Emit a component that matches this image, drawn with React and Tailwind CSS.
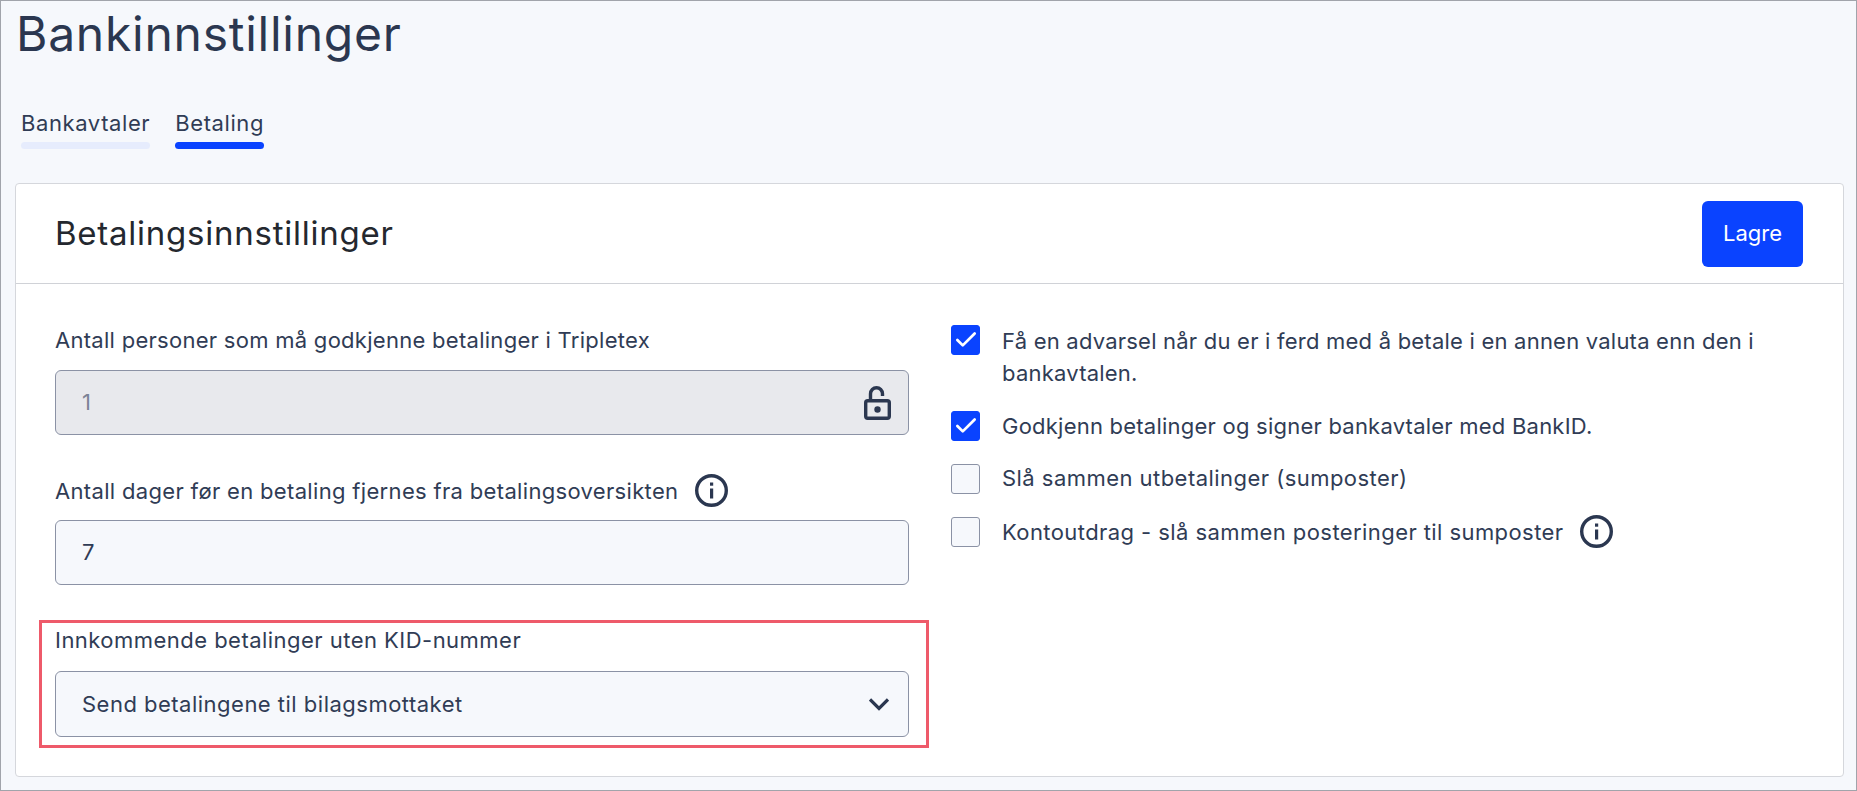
import { Check } from "lucide-react";

const font = { fontFamily: "Inter, sans-serif" };

function InfoIcon() {
  return (
    <svg viewBox="0 0 33 33" className="h-[33px] w-[33px] shrink-0" fill="none">
      <circle cx="16.5" cy="16.5" r="14.8" stroke="#2b3750" strokeWidth="3.4" />
      <rect x="15" y="14.5" width="3.2" height="10" fill="#2b3750" />
      <rect x="15" y="8.5" width="3.2" height="3.2" fill="#2b3750" />
    </svg>
  );
}

function LockIcon() {
  return (
    <svg viewBox="0 0 27 34" className="h-[34px] w-[27px]" fill="none">
      <path d="M6.5 13V7.7a6 6 0 0 1 12 0V10" stroke="#2b3750" strokeWidth="3.4" />
      <rect x="1.7" y="14.7" width="23.6" height="17.6" rx="2" stroke="#2b3750" strokeWidth="3.4" />
      <circle cx="13.5" cy="23.5" r="3.2" fill="#2b3750" />
    </svg>
  );
}

function Tab({ label, active }) {
  return (
    <div className="flex flex-col">
      <span className="text-[22px] leading-[30px] tracking-[0.6px] text-[#303c55]">{label}</span>
      <span className={`mt-[4px] h-[7px] rounded-full ${active ? "bg-[#0a43ff]" : "bg-[#e6ecfd]"}`} />
    </div>
  );
}

function CheckRow({ checked, className, textClass, children }) {
  return (
    <div className={`flex items-start gap-[22px] ${className}`}>
      <span
        className={`flex h-[30px] w-[29px] shrink-0 items-center justify-center rounded-[3px] border ${
          checked ? "border-[#0a43ff] bg-[#0a43ff]" : "border-[#8b92a5] bg-[#f6f8fc]"
        }`}
      >
        {checked && <Check className="h-[26px] w-[26px] text-white" strokeWidth={2.5} />}
      </span>
      <div className={`text-[22px] leading-[32px] text-[#303c55] ${textClass}`}>{children}</div>
    </div>
  );
}

export default function App() {
  return (
    <div style={font} className="flex h-[791px] flex-col border border-[#a1a4ab] bg-[#f6f8fc] text-[#303c55]">
      <h1 className="ml-[15px] mt-[2px] text-[48px] leading-[62px] tracking-[0.75px] text-[#2b3750]">Bankinnstillinger</h1>

      <div className="ml-[20px] mt-[43px] flex gap-[25px]">
        <Tab label="Bankavtaler" />
        <Tab label="Betaling" active />
      </div>

      <div className="ml-[14px] mr-[12px] mt-[34px] flex h-[594px] flex-col rounded-[4px] border border-[#d5d7dc] bg-white">
        <div className="flex h-[100px] shrink-0 items-center justify-between border-b border-[#d0d2d7] pl-[39px] pr-[40px]">
          <h2 className="text-[33px] tracking-[0.76px] text-[#24282f]">Betalingsinnstillinger</h2>
          <button className="h-[66px] w-[101px] rounded-[6px] bg-[#0a43ff] text-[22px] text-white">Lagre</button>
        </div>

        <div className="flex">
          <div className="ml-[39px] flex w-[854px] flex-col">
            <label className="mt-[41px] text-[22px] leading-[30px] tracking-[0.28px]">Antall personer som må godkjenne betalinger i Tripletex</label>
            <div className="mt-[15px] flex h-[65px] items-center justify-between rounded-[6px] border border-[#8b92a5] bg-[#e8e9ed] pl-[26px] pr-[17px] text-[22px] text-[#7b8396]">
              1
              <LockIcon />
            </div>

            <div className="mt-[38px] flex h-[35px] items-center gap-[17px]">
              <label className="text-[22px] leading-[30px] tracking-[0.33px]">Antall dager før en betaling fjernes fra betalingsoversikten</label>
              <InfoIcon />
            </div>
            <div className="mt-[12px] flex h-[65px] items-center rounded-[6px] border border-[#8b92a5] bg-[#f6f8fc] pl-[26px] text-[22px]">
              7
            </div>

            <div className="relative">
              <div className="absolute -left-[16px] top-[35px] h-[128px] w-[890px] border-[3px] border-[#ee5a6a]" />
              <label className="mt-[40px] block text-[22px] leading-[30px] tracking-[0.47px]">Innkommende betalinger uten KID-nummer</label>
              <div className="mt-[16px] flex h-[66px] items-center justify-between rounded-[6px] border border-[#8b92a5] bg-[#f6f8fc] pl-[26px] pr-[19px] text-[22px] tracking-[0.49px]">
                Send betalingene til bilagsmottaket
                <svg viewBox="0 0 20 13" className="h-[13px] w-[20px]" fill="none">
                  <path d="M1 1.5l9 9 9-9" stroke="#2b3750" strokeWidth="3.2" />
                </svg>
              </div>
            </div>
          </div>

          <div className="ml-[42px] flex w-[810px] flex-col pt-[41px]">
            <CheckRow checked textClass="tracking-[0.22px]">
              Få en advarsel når du er i ferd med å betale i en annen valuta enn den i bankavtalen.
            </CheckRow>
            <CheckRow checked className="mt-[22px]" textClass="-mt-[1px] tracking-[0.23px]">
              Godkjenn betalinger og signer bankavtaler med BankID.
            </CheckRow>
            <CheckRow className="mt-[22px]" textClass="-mt-[2px] tracking-[0.46px]">
              Slå sammen utbetalinger (sumposter)
            </CheckRow>
            <CheckRow className="mt-[23px]" textClass="-mt-[2px] tracking-[0.42px]">
              <div className="flex items-center gap-[17px]">
                Kontoutdrag - slå sammen posteringer til sumposter
                <InfoIcon />
              </div>
            </CheckRow>
          </div>
        </div>
      </div>
    </div>
  );
}
